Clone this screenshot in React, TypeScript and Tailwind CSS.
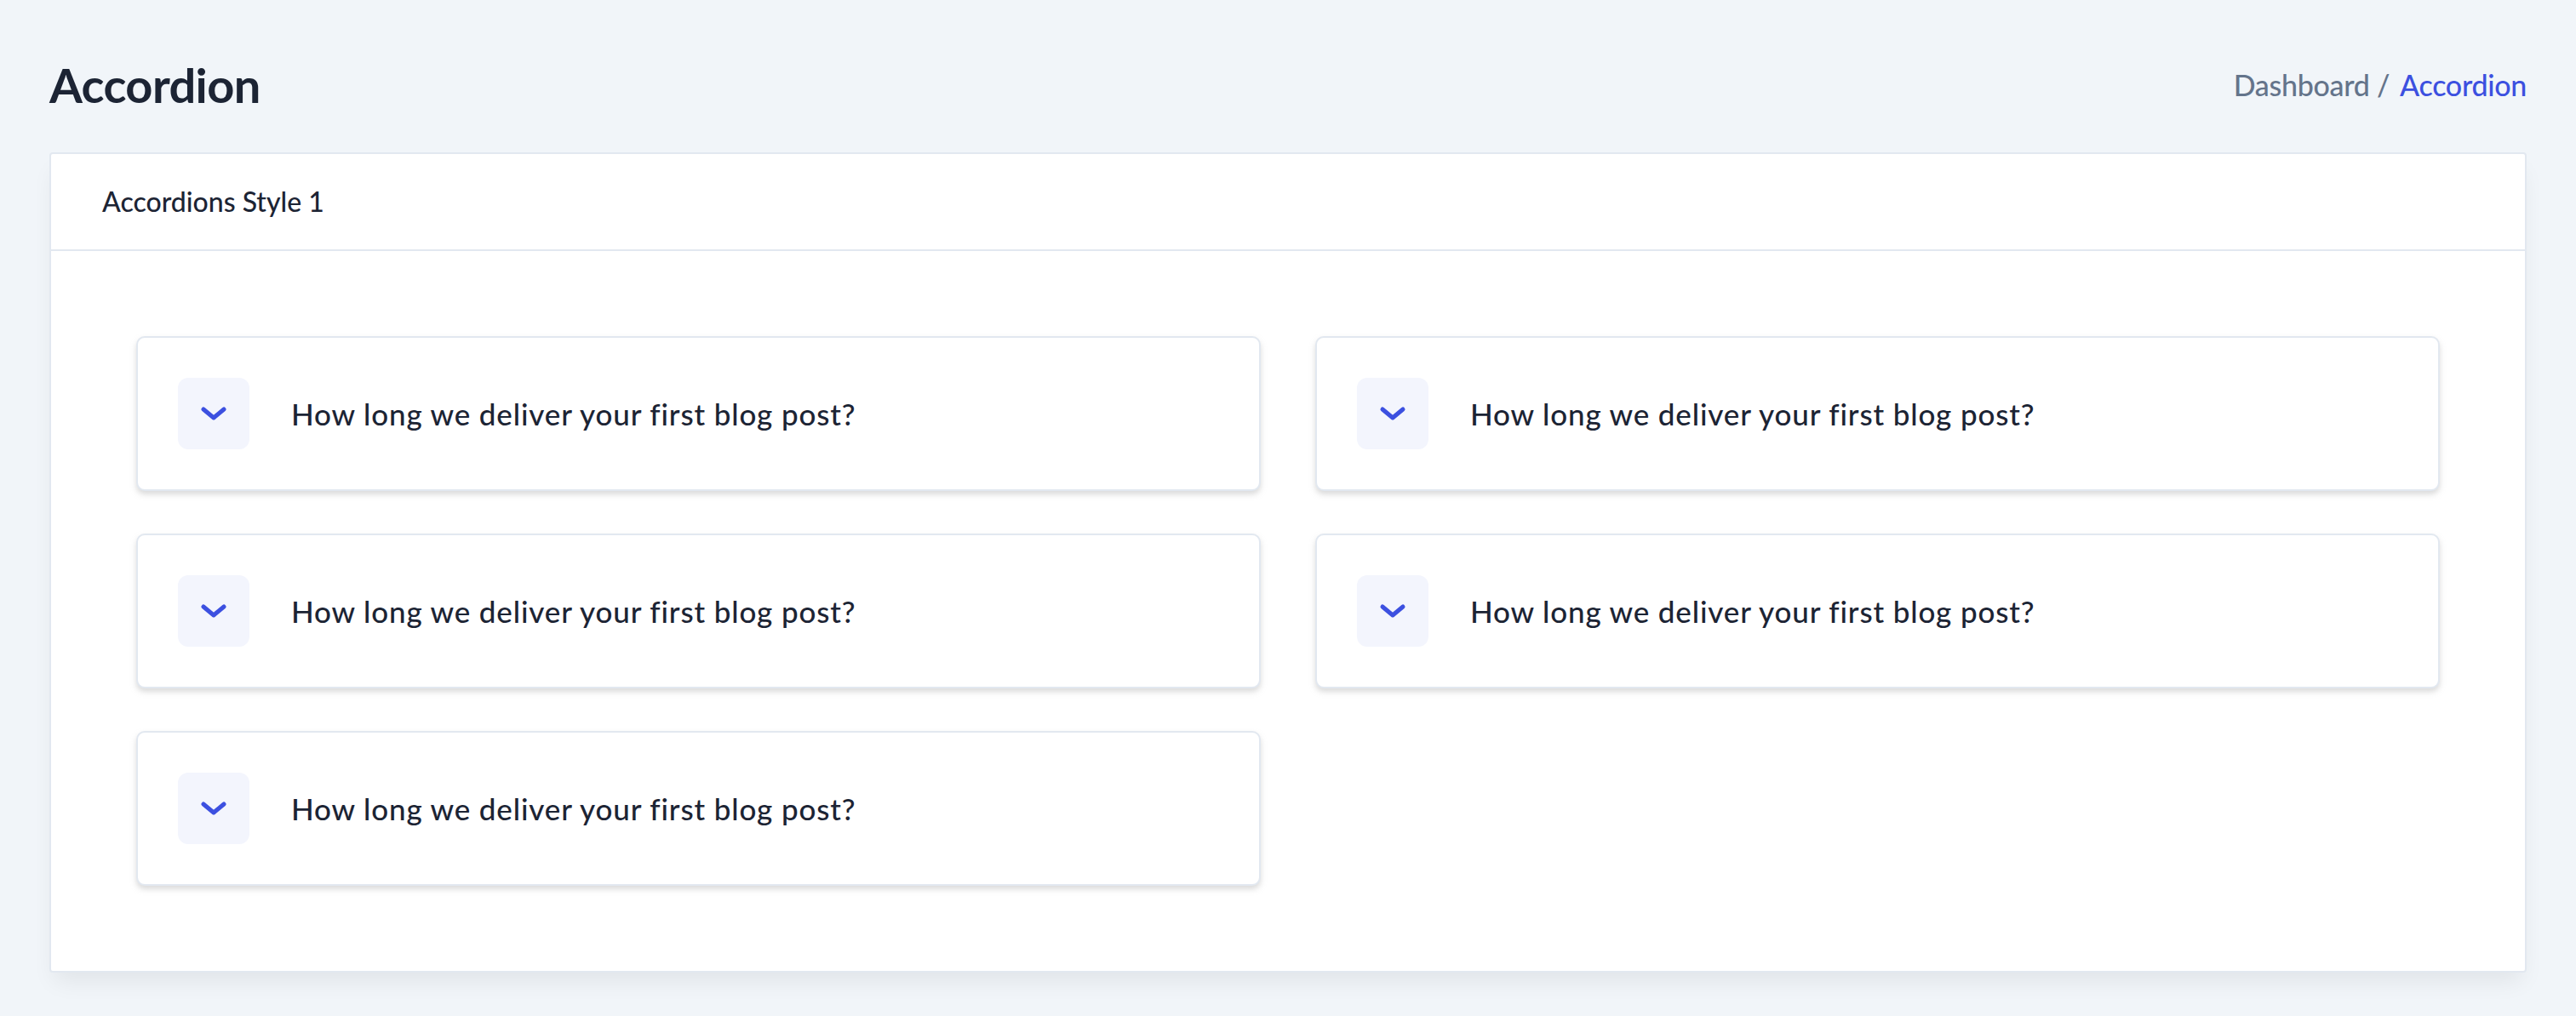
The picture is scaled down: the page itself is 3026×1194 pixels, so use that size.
import React from "react";

function Chevron() {
  return (
    <svg width="32" height="18" viewBox="0 0 32 18" fill="none">
      <path d="M4 4 L16 14 L28 4" stroke="#3C50E0" strokeWidth="5" strokeLinecap="round" strokeLinejoin="round" />
    </svg>
  );
}

function Item() {
  return (
    <div className="flex items-center gap-[49px] rounded-[10px] border-2 border-[#E2E8F0] bg-white p-[47px] shadow-[0_4px_6px_rgba(183,183,183,0.5)]">
      <div className="flex h-[84px] w-[84px] shrink-0 items-center justify-center rounded-[12px] bg-[#F3F5FD]">
        <Chevron />
      </div>
      <span className="text-[35px] leading-[42px] font-medium tracking-[0.85px] text-[#1C2434]">
        How long we deliver your first blog post?
      </span>
    </div>
  );
}

export default function App() {
  return (
    <div
      className="min-h-[1194px] w-full bg-[#F1F5F9] px-[58px] pt-[66px] pb-[52px]"
      style={{ fontFamily: "Lato, 'Open Sans', sans-serif" }}
    >
      <div className="mb-[46px] flex items-center justify-between">
        <h1 className="text-[56px] leading-[67px] font-bold tracking-[-0.6px] text-[#1C2434]">Accordion</h1>
        <nav className="flex items-center text-[34px] leading-[42px] font-medium tracking-[-0.3px]">
          <span className="text-[#64748B]">Dashboard /</span>
          <span className="ml-[12px] text-[#3C50E0]">Accordion</span>
        </nav>
      </div>
      <div className="rounded-[4px] border-2 border-[#E2E8F0] bg-white shadow-[0_16px_26px_-6px_rgba(0,0,0,0.07)]">
        <div className="border-b-2 border-[#E2E8F0] px-[60px] py-[37px]">
          <h3 className="text-[32px] leading-[38px] font-medium text-[#1C2434]">Accordions Style 1</h3>
        </div>
        <div className="grid grid-cols-2 gap-x-[64px] gap-y-[50px] p-[100px]">
          <Item />
          <Item />
          <Item />
          <Item />
          <Item />
        </div>
      </div>
    </div>
  );
}
